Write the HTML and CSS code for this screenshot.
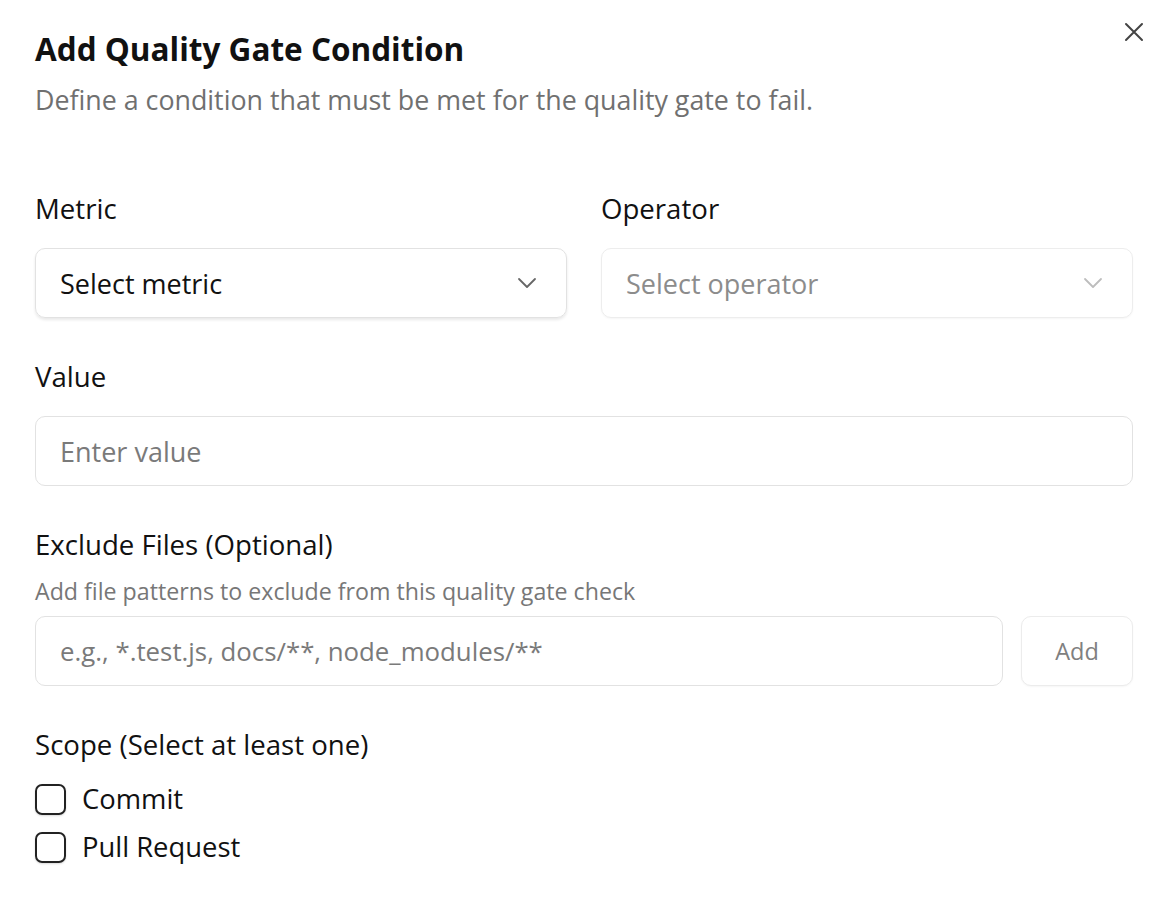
FILE: index.html
```html
<!DOCTYPE html>
<html>
<head>
<meta charset="utf-8">
<link rel="stylesheet" href="styles.css">
</head>
<body>
<div class="dialog">
  <button class="close" aria-label="Close">
    <svg width="24" height="24" viewBox="0 0 24 24" fill="none" stroke="#444" stroke-width="2" stroke-linecap="round"><path d="M4 4L20 20M20 4L4 20"/></svg>
  </button>
  <h1 class="title">Add Quality Gate Condition</h1>
  <p class="subtitle">Define a condition that must be met for the quality gate to fail.</p>

  <div class="row two">
    <div class="field">
      <div class="label">Metric</div>
      <div class="select">
        <span class="val">Select metric</span>
        <svg class="chev" width="20" height="20" viewBox="0 0 20 20" fill="none" stroke="#666" stroke-width="1.8" stroke-linecap="round" stroke-linejoin="round"><path d="M2 6l8 8 8-8"/></svg>
      </div>
    </div>
    <div class="field">
      <div class="label">Operator</div>
      <div class="select disabled">
        <span class="val ph">Select operator</span>
        <svg class="chev" width="20" height="20" viewBox="0 0 20 20" fill="none" stroke="#bdbdbd" stroke-width="1.8" stroke-linecap="round" stroke-linejoin="round"><path d="M2 6l8 8 8-8"/></svg>
      </div>
    </div>
  </div>

  <div class="field">
    <div class="label">Value</div>
    <div class="input"><span class="ph">Enter value</span></div>
  </div>

  <div class="field">
    <div class="label tight">Exclude Files (Optional)</div>
    <div class="hint">Add file patterns to exclude from this quality gate check</div>
    <div class="inline">
      <div class="input grow"><span class="ph pattern">e.g., *.test.js, docs/**, node_modules/**</span></div>
      <button class="add">Add</button>
    </div>
  </div>

  <div class="field scope">
    <div class="label">Scope (Select at least one)</div>
    <label class="check"><span class="box"></span><span>Commit</span></label>
    <label class="check"><span class="box"></span><span>Pull Request</span></label>
  </div>
</div>
</body>
</html>
```

FILE: styles.css
```css
* { box-sizing: border-box; }
html, body { margin: 0; padding: 0; background: #fff; }
body {
  font-family: "Open Sans", "Lato", sans-serif;
  color: #111;
}
.dialog {
  position: relative;
  padding: 26px 37px 0 35px;
}
.close {
  position: absolute;
  top: 20px;
  right: 24px;
  background: none;
  border: 0;
  padding: 0;
  width: 24px;
  height: 24px;
}
.title {
  margin: 0;
  font-size: 31.5px;
  font-weight: 700;
  line-height: 46px;
  letter-spacing: 0;
}
.subtitle {
  margin: 11px 0 0;
  font-size: 26.8px;
  line-height: 34px;
  color: #707070;
}
.row.two {
  display: grid;
  grid-template-columns: 1fr 1fr;
  gap: 34px;
  margin-top: 74px;
  margin-bottom: 41px;
}
.field { margin-bottom: 41px; }
.row.two .field { margin-bottom: 0; }
.label {
  font-size: 27.6px;
  line-height: 34px;
  font-weight: 500;
  margin-bottom: 23px;
}
.label.tight { margin-bottom: 16px; }
.select {
  height: 70px;
  border: 1px solid #e2e2e2;
  border-radius: 10px;
  box-shadow: 0 2px 3px rgba(0,0,0,0.09);
  display: flex;
  align-items: center;
  justify-content: space-between;
  padding: 0 29px 0 24px;
  font-size: 27px;
}
.select.disabled { border-color: #ededed; box-shadow: 0 1px 2px rgba(0,0,0,0.04); }
.ph { color: #7a7a7a; }
.select.disabled .ph { color: #8c8c8c; }
.input {
  height: 70px;
  border: 1px solid #e2e2e2;
  border-radius: 10px;
  display: flex;
  align-items: center;
  padding: 0 24px;
  font-size: 27px;
}
.pattern { font-size: 25.8px; }
.hint {
  font-size: 23.2px;
  line-height: 28px;
  color: #777;
  margin-bottom: 11px;
}
.inline { display: flex; gap: 18px; }
.grow { flex: 1; }
.add {
  width: 112px;
  height: 70px;
  border: 1px solid #ececec;
  border-radius: 10px;
  background: #fff;
  font-family: inherit;
  font-size: 23.5px;
  color: #808080;
  box-shadow: 0 1px 2px rgba(0,0,0,0.04);
}
.scope .label { margin-bottom: 21px; }
.check {
  display: flex;
  align-items: center;
  gap: 16px;
  font-size: 27.4px;
  font-weight: 500;
  line-height: 34px;
  margin-bottom: 14px;
}
.box {
  width: 31px;
  height: 31px;
  border: 2px solid #222;
  border-radius: 7px;
  box-shadow: 0 1px 2px rgba(0,0,0,0.15);
}
```
